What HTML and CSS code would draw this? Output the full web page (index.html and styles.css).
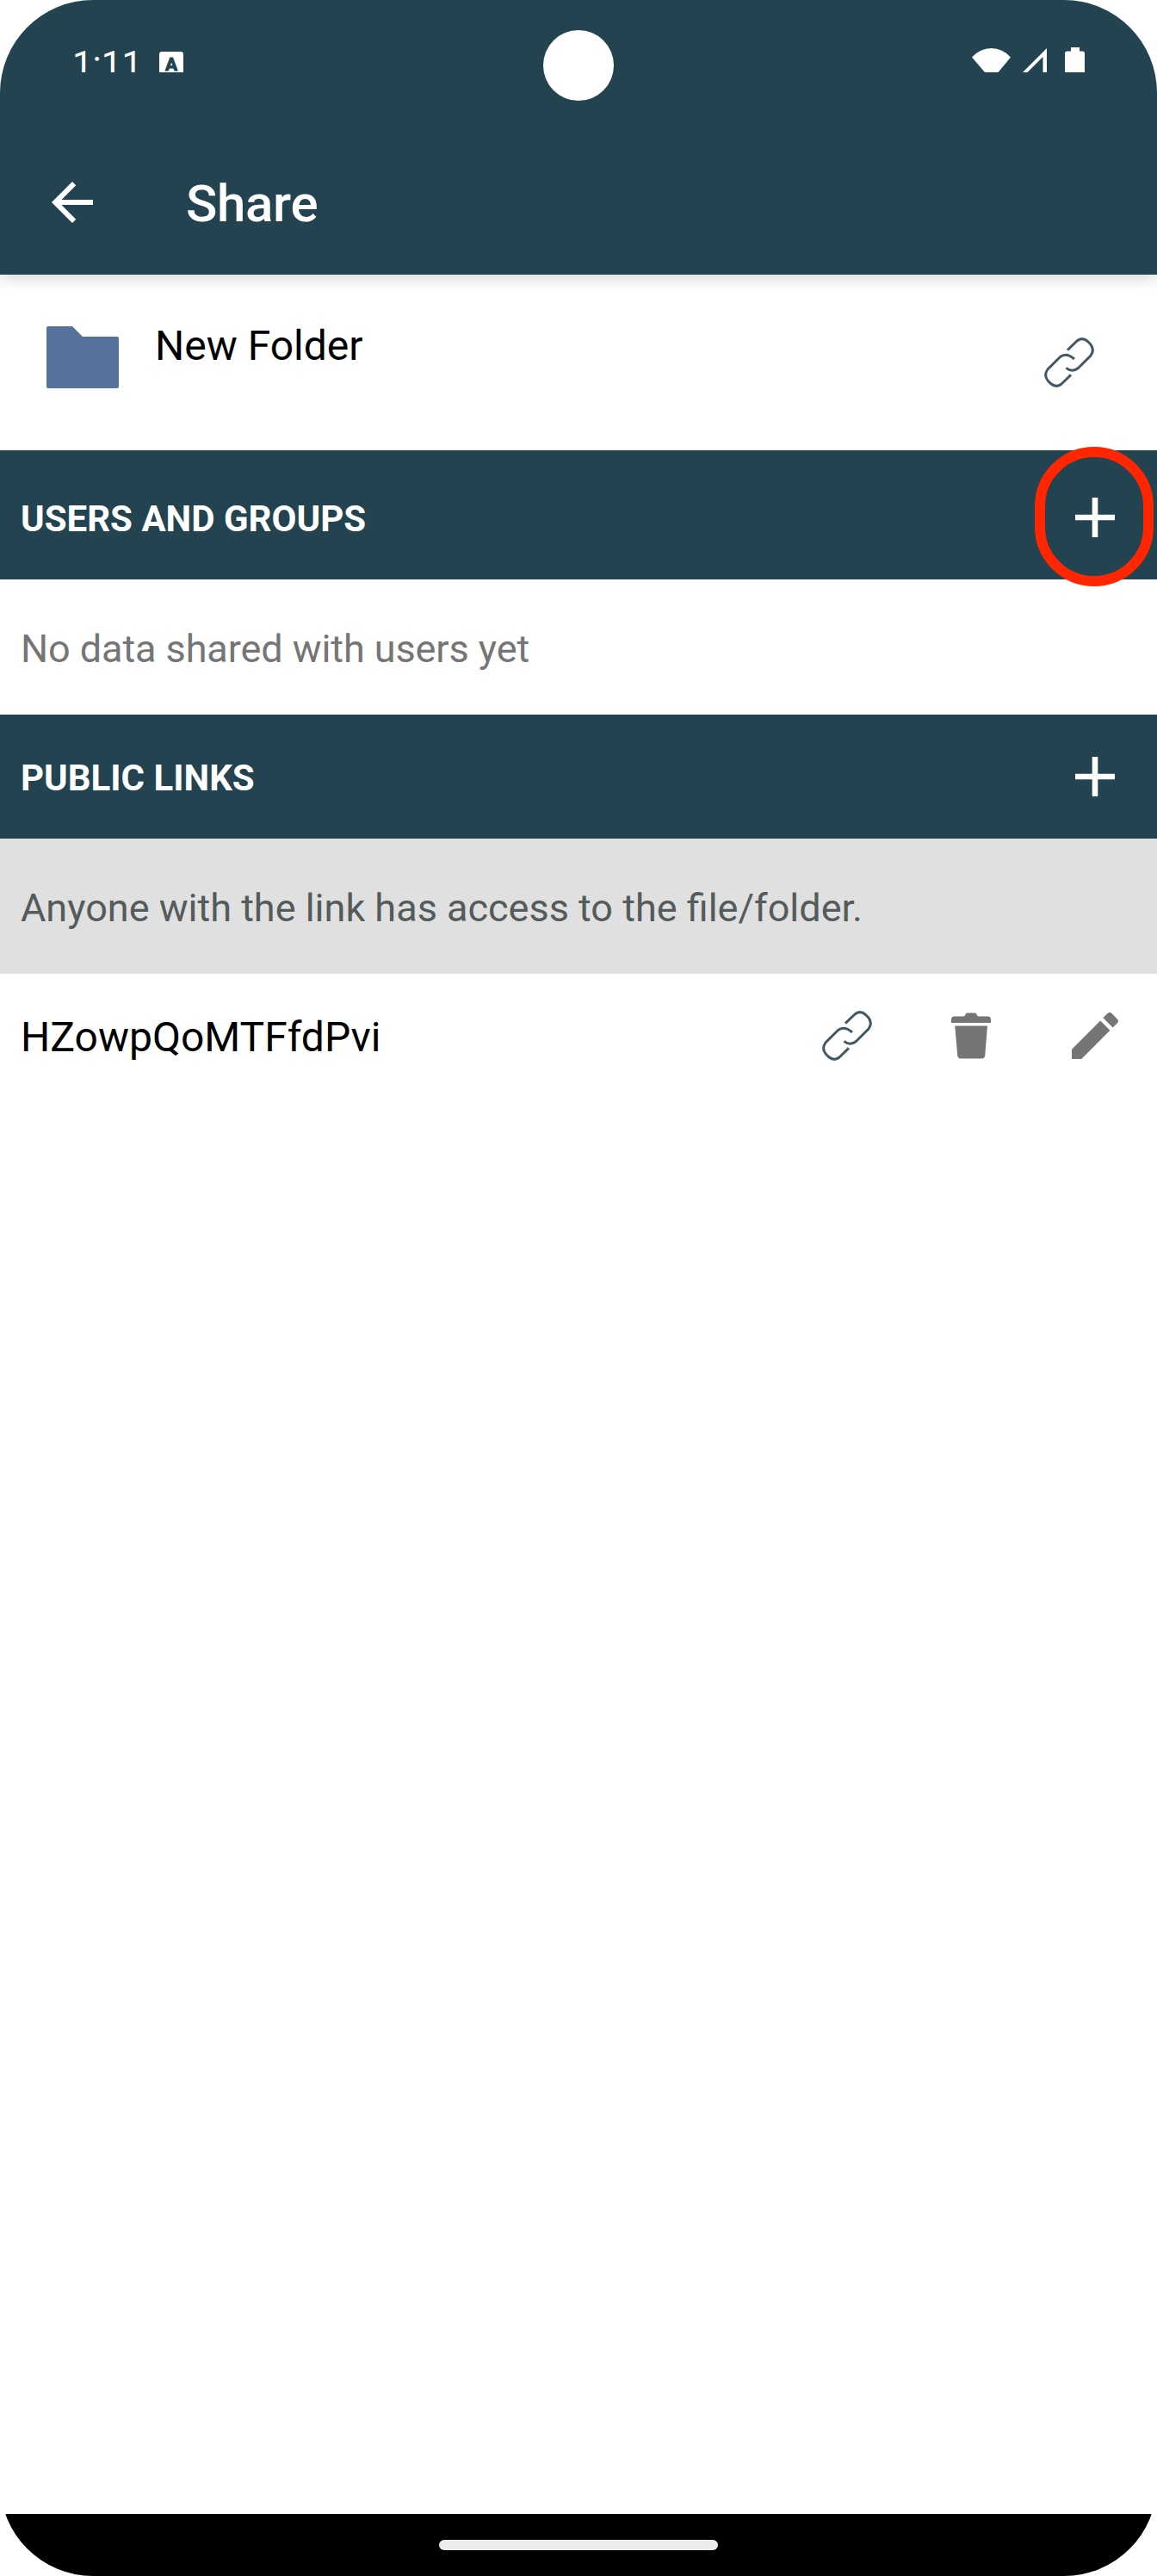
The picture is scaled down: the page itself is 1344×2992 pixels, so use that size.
FILE: index.html
```html
<!DOCTYPE html>
<html lang="en">
<head>
<meta charset="utf-8">
<title>Share</title>
<link rel="stylesheet" href="styles.css">
</head>
<body>
<div class="screen">
  <header class="top">
    <div class="status">
      <span class="clock">1:11</span>
      <span class="keyboard">A</span>
      <svg class="indicators" width="134" height="30" viewBox="0 0 134 30" fill="#fff">
        <path d="M0 11.5Q9.500 1 22.500 1T45 11.500L30.500 29H15Z"/>
        <path fill-rule="evenodd" d="M58 30L87 1V30ZM64.500 29H82.500V11Z"/>
        <path d="M108 30V7q0-2.500 2.500-2.500H115V0h10v4.500h3.500q2.500 0 2.500 2.500V30Z"/>
      </svg>
    </div>
    <div class="toolbar">
      <svg width="72" height="72" viewBox="0 0 24 24" fill="#fff"><path d="M20 11H7.830l5.590-5.590L12 4l-8 8 8 8 1.410-1.410L7.830 13H20v-2z"/></svg>
      <h1>Share</h1>
    </div>
    <div class="camera"></div>
  </header>
  <main>
    <section class="file">
      <svg width="84" height="72" viewBox="0 0 84 72"><path fill="#55739a" d="M2 0H30L42 12H82q2 0 2 2V70q0 2-2 2H2q-2 0-2-2V2q0-2 2-2Z"/></svg>
      <span class="name">New Folder</span>
      <svg class="link" width="58" height="58" viewBox="0 0 58 58"><use href="#chain"/></svg>
    </section>
    <section class="bar users">
      <h2>USERS AND GROUPS</h2>
      <svg class="plus" width="46" height="46" viewBox="0 0 46 46"><path d="M23 0V46M0 23H46"/></svg>
      <div class="ring"></div>
    </section>
    <p class="message empty">No data shared with users yet</p>
    <section class="bar public">
      <h2>PUBLIC LINKS</h2>
      <svg class="plus" width="46" height="46" viewBox="0 0 46 46"><path d="M23 0V46M0 23H46"/></svg>
    </section>
    <p class="message note">Anyone with the link has access to the file/folder.</p>
    <section class="entry">
      <span class="name">HZowpQoMTFfdPvi</span>
      <div class="actions">
        <svg class="link" width="58" height="58" viewBox="0 0 58 58">
          <g id="chain">
            <path d="M27 14.700L38 4Q44-1 50.500 4.500L53.500 7.500Q59 14 54 21L39.500 35.500Q32.500 41 25.500 35.300"/>
            <path d="M31 43.300L20 54Q14 59 7.500 53.500L4.500 50.500Q-1 44 4 37L18.500 22.500Q25.500 17 35 25"/>
          </g>
        </svg>
        <svg class="trash" width="46" height="54" viewBox="0 0 46 54" fill="#757575"><path d="M0 12V8q0-3.500 3.500-3.500H15L17 1.500Q17.300.5 18.500.5h9q1.200 0 1.500 1l2 3H42.500Q46 4.500 46 8v4ZM4.200 15.500H42L39.300 49.500Q39 53.500 35.500 53.500H11Q7.500 53.500 7.200 49.500Z"/></svg>
        <svg width="54" height="54" viewBox="3 3 18 18" fill="#757575"><path d="M3 17.250V21h3.750L17.810 9.940l-3.750-3.750L3 17.250zM20.710 7.040c.39-.39.39-1.020 0-1.410l-2.340-2.340c-.39-.39-1.020-.39-1.410 0l-1.830 1.830 3.750 3.750 1.830-1.830z"/></svg>
      </div>
    </section>
  </main>
  <footer class="nav"><div class="handle"></div></footer>
</div>
</body>
</html>
```

FILE: styles.css
```css
* { box-sizing: border-box; }
body { margin: 0; background: #fff; font-family: Roboto, sans-serif; color: #000; }
h1, h2, p { margin: 0; }
svg { display: block; flex: none; }

.screen {
  display: flex;
  flex-direction: column;
  width: 1344px;
  height: 2992px;
  overflow: hidden;
  border-radius: 108px;
  background: #fff;
}

.top {
  position: relative;
  z-index: 1;
  height: 319px;
  background: #22434f;
  color: #fff;
  box-shadow: 0 3px 18px rgba(0, 0, 0, .18);
}
.status {
  display: flex;
  align-items: flex-start;
  height: 84px;
  padding: 50px 81px 0 84px;
  overflow: hidden;
}
.clock { width: 101px; font-size: 42px; line-height: 50px; }
.keyboard {
  width: 28px;
  height: 28px;
  margin-top: 10px;
  border-radius: 3px;
  background: #fff;
  color: #22434f;
  font-size: 21px;
  font-weight: 700;
  line-height: 30px;
  text-align: center;
  -webkit-text-stroke: 1px #22434f;
}
.indicators { margin: 5px 0 0 auto; }
.toolbar { display: flex; align-items: flex-start; gap: 96px; height: 235px; padding: 115px 48px 0; }
h1 { margin-top: 2px; font-size: 60px; font-weight: 500; line-height: 72px; letter-spacing: -.3px; }
.camera {
  position: absolute;
  top: 35px;
  left: 631px;
  width: 82px;
  height: 82px;
  border-radius: 50%;
  background: #fff;
}

.file { display: flex; align-items: flex-start; height: 204px; padding: 60px 73px 0 54px; }
.name { font-size: 48px; line-height: 56px; }
.file .name { margin: -5px 0 0 42px; }
.link { fill: none; stroke: #435863; stroke-width: 3; }
.file .link { margin: 13px 0 0 auto; }

.bar {
  position: relative;
  display: flex;
  align-items: center;
  justify-content: space-between;
  padding: 0 49px 0 24px;
  background: #22434f;
  color: #fff;
}
.users { height: 150px; padding-top: 6px; }
.public { height: 144px; }
h2 { padding-top: 4px; font-size: 42px; font-weight: 700; line-height: 50px; }
.plus { stroke: #fff; stroke-width: 6.6; }
.ring {
  position: absolute;
  top: -4px;
  right: 4px;
  width: 138px;
  height: 162px;
  border: 12px solid #ff2600;
  border-radius: 69px;
  z-index: 1;
}

.message { height: 157px; padding: 54px 24px 0; color: #757575; font-size: 45px; line-height: 53px; }
.empty { letter-spacing: -.08px; }
.note { background: #e0e0e0; color: #535b5b; }
.entry { display: flex; align-items: flex-start; justify-content: space-between; padding: 43px 45px 0 24px; }
.entry .name { margin-top: 3px; }
.actions { display: flex; align-items: center; }
.trash { margin: 0 94px 0 92px; }

.nav { display: flex; align-items: center; justify-content: center; height: 72px; margin-top: auto; background: #000; }
.handle { width: 324px; height: 12px; border-radius: 6px; background: #ebebeb; }
```
